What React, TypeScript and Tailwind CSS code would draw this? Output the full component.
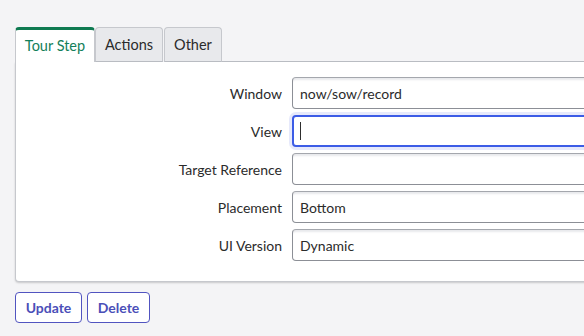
import React from "react";

const fields = [
  { label: "Window", value: "now/sow/record" },
  { label: "View", value: "", focused: true },
  { label: "Target Reference", value: "" },
  { label: "Placement", value: "Bottom" },
  { label: "UI Version", value: "Dynamic" },
];

function Field({ label, value, focused }: { label: string; value: string; focused?: boolean }) {
  return (
    <div className="flex items-center h-[32px]">
      <label className="w-[276px] pr-[10px] text-right text-[14px] text-[#2b2b2b]">{label}</label>
      <div
        className={
          focused
            ? "flex items-center h-[32px] w-[420px] rounded-[4px] border-2 border-[#3c5ce6] bg-white px-[6px] shadow-[0_0_0_3px_#e6e9fb]"
            : "flex items-center h-[32px] w-[420px] rounded-[4px] border border-[#8c8f96] border-t-[#a4a7ad] bg-white px-[7px] shadow-[inset_0_3px_2px_-1px_#e8e9ec]"
        }
      >
        {focused ? (
          <span className="block w-[1px] h-[18px] bg-[#2e2e2e]" />
        ) : (
          <span className="text-[14px] text-[#2b2b2b]">{value}</span>
        )}
      </div>
    </div>
  );
}

export default function App() {
  return (
    <div className="h-[336px] w-[584px] overflow-hidden bg-[#f4f4f6] pl-[15px] pt-[27px] font-['Lato','Noto_Sans',sans-serif]">
      <div className="flex items-end h-[35px]">
        <div className="flex items-center justify-center h-[35px] w-[80px] bg-white border-t-[3px] border-t-[#0e7a51] border-x border-x-[#c6c8cd] rounded-t-[4px] text-[14.5px] text-[#13805a]">
          Tour Step
        </div>
        <div className="flex items-center justify-center h-[35px] w-[68px] bg-[#e8e9ec] border border-[#c6c8cd] border-b-[#b9bcc2] rounded-t-[4px] text-[14.5px] text-[#2b2b2b]">
          Actions
        </div>
        <div className="flex items-center justify-center h-[35px] w-[58px] ml-[1px] bg-[#e8e9ec] border border-[#c6c8cd] border-b-[#b9bcc2] rounded-t-[4px] text-[14.5px] text-[#2b2b2b]">
          Other
        </div>
        <div className="flex-1 h-[35px] border-b border-b-[#b9bcc2]" />
      </div>
      <div className="w-[720px] bg-white border border-t-0 border-[#c6c8cd] rounded-b-[4px] shadow-[0_1px_2px_rgba(0,0,0,0.18)] pt-[15px] pb-[20px] flex flex-col gap-[6px]">
        {fields.map((f) => (
          <Field key={f.label} label={f.label} value={f.value} focused={f.focused} />
        ))}
      </div>
      <div className="flex gap-[5px] mt-[10px]">
        <button className="h-[31px] w-[67px] rounded-[4px] border border-[#5154c0] bg-white text-[14px] font-bold text-[#4b4fb8]">
          Update
        </button>
        <button className="h-[31px] w-[63px] rounded-[4px] border border-[#5154c0] bg-white text-[14px] font-bold text-[#4b4fb8]">
          Delete
        </button>
      </div>
    </div>
  );
}
